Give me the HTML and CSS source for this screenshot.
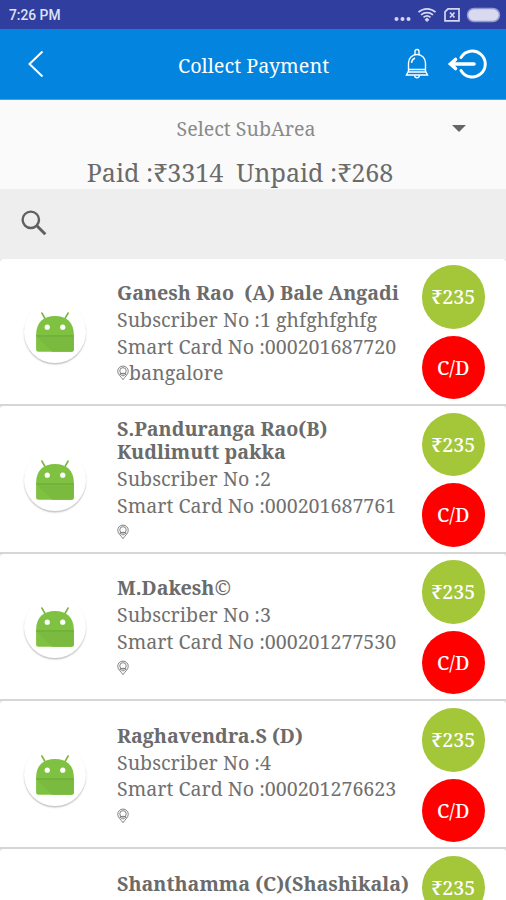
FILE: index.html
```html
<!DOCTYPE html>
<html lang="en">
<head>
    <meta charset="UTF-8">
    <meta name="viewport" content="width=device-width, initial-scale=1.0">
    <title>Collect Payment</title>
    <link rel="stylesheet" href="styles.css">
</head>
<body>
    <!-- Shared icons -->
    <svg class="sprite" width="0" height="0">
        <symbol id="droid" viewBox="0 0 64 64">
            <path d="M18.500 12.500l4 7M45.500 12.500l-4 7" stroke="#7cb342" stroke-width="1.8" stroke-linecap="round"/>
            <path d="M12.500 35C12.500 22 20 15.500 32 15.500s19.500 6.500 19.500 19.500v15a2.500 2.500 0 0 1-2.500 2.500H15a2.500 2.500 0 0 1-2.500-2.500z" fill="#7fc241"/>
            <path d="M12.500 36h39v14a2.500 2.500 0 0 1-2.500 2.500H29z" fill="#7aba3f"/>
            <path d="M12.500 36h39" stroke="#6aa53a" stroke-width="1"/>
            <circle cx="24" cy="27" r="2.700" fill="#fff"/>
            <circle cx="40" cy="27" r="2.700" fill="#fff"/>
        </symbol>
        <symbol id="pin" viewBox="0 0 13 16">
            <path d="M6.500 15.200C4.500 12 .8 9.800.8 6.200a5.700 5.700 0 0 1 11.400 0c0 3.600-3.700 5.800-5.700 9z"/>
            <circle cx="6.500" cy="5.700" r="3.500"/>
            <path d="M3 9.300c1-1.300 6-1.300 7 0l-3.500 2z"/>
        </symbol>
    </svg>

    <div class="status-bar">
        <span>7:26 PM</span>
        <svg class="status-icons" width="114" height="20" viewBox="0 0 114 20">
            <g fill="#d5d7f0">
                <circle cx="9.500" cy="14" r="2"/>
                <circle cx="15.500" cy="14" r="2"/>
                <circle cx="21.500" cy="14" r="2"/>
                <path d="M40 12.500l2.400 2.300L40 17l-2.400-2.200z"/>
            </g>
            <g fill="none" stroke="#d5d7f0" stroke-width="1.700">
                <path d="M31.500 7.200c5-4.400 12-4.400 17 0M34 9.800c3.500-3 8.500-3 12 0M36.500 12.300c2.200-1.800 4.800-1.800 7 0"/>
                <path d="M61 3.800h11v12H58V6.800z"/>
                <path d="M63 7.500l4.500 5M67.500 7.500l-4.500 5"/>
            </g>
            <rect x="80.500" y="3.500" width="32" height="13" rx="6.500" fill="#d9daf0" stroke="#9297cf" stroke-width="1.500"/>
        </svg>
    </div>

    <header class="toolbar">
        <svg class="back" width="16" height="28" viewBox="0 0 16 28">
            <path d="M14.500 1.500L1.500 14l13 12.500"/>
        </svg>
        <h1>Collect Payment</h1>
        <svg class="bell" width="24" height="32" viewBox="0 0 24 32">
            <path d="M10 7V3.500a2 2 0 0 1 4 0V7M3.500 24v-9c0-4.500 3.500-8.500 8.500-8.500s8.500 4 8.500 8.500v9M3.500 21.500h17M3 24h18l1.500 3h-21zM9.500 27.500c.5 3 4.500 3 5 0M6.500 15c.2-2.300 1.500-4.200 3.500-5"/>
        </svg>
        <svg class="logout" width="40" height="32" viewBox="0 0 40 32">
            <path d="M14 9.500a13 13 0 1 1 0 13" stroke-width="3"/>
            <path d="M27 16H4M8.500 11.500L3.500 16l5 4.500" stroke-width="3.600"/>
        </svg>
    </header>

    <div class="summary">
        <div class="area-select">Select SubArea <i class="caret"></i></div>
        <div class="totals">Paid :₹3314&nbsp; Unpaid :₹268</div>
    </div>

    <div class="search">
        <svg width="26" height="26" viewBox="0 0 26 26">
            <circle cx="9.800" cy="9.800" r="8.200" stroke-width="2.400"/>
            <path d="M15.800 15.800l8.500 8.500" stroke-width="3"/>
        </svg>
    </div>

    <!-- Subscribers -->
    <div class="list">
        <div class="card">
            <div class="avatar"><svg><use href="#droid"/></svg></div>
            <div class="info">
                <h2>Ganesh Rao&nbsp; (A) Bale Angadi</h2>
                <p>Subscriber No :1 ghfghfghfg</p>
                <p>Smart Card No :000201687720</p>
                <p class="place"><svg class="pin"><use href="#pin"/></svg>bangalore</p>
            </div>
            <div class="actions">
                <div class="amount">₹235</div>
                <div class="cd">C/D</div>
            </div>
        </div>
        <div class="card">
            <div class="avatar"><svg><use href="#droid"/></svg></div>
            <div class="info">
                <h2>S.Panduranga Rao(B)<br>Kudlimutt pakka</h2>
                <p>Subscriber No :2</p>
                <p>Smart Card No :000201687761</p>
                <p class="place"><svg class="pin"><use href="#pin"/></svg></p>
            </div>
            <div class="actions">
                <div class="amount">₹235</div>
                <div class="cd">C/D</div>
            </div>
        </div>
        <div class="card">
            <div class="avatar"><svg><use href="#droid"/></svg></div>
            <div class="info">
                <h2>M.Dakesh<span class="mark">©</span></h2>
                <p>Subscriber No :3</p>
                <p>Smart Card No :000201277530</p>
                <p class="place"><svg class="pin"><use href="#pin"/></svg></p>
            </div>
            <div class="actions">
                <div class="amount">₹235</div>
                <div class="cd">C/D</div>
            </div>
        </div>
        <div class="card">
            <div class="avatar"><svg><use href="#droid"/></svg></div>
            <div class="info">
                <h2>Raghavendra.S (D)</h2>
                <p>Subscriber No :4</p>
                <p>Smart Card No :000201276623</p>
                <p class="place"><svg class="pin"><use href="#pin"/></svg></p>
            </div>
            <div class="actions">
                <div class="amount">₹235</div>
                <div class="cd">C/D</div>
            </div>
        </div>
        <div class="card partial">
            <div class="avatar"></div>
            <div class="info">
                <h2>Shanthamma (C)(Shashikala)</h2>
            </div>
            <div class="actions">
                <div class="amount">₹235</div>
            </div>
        </div>
    </div>
</body>
</html>
```
FILE: styles.css
```css
* {
    box-sizing: border-box;
}

body {
    margin: 0;
    height: 900px;
    overflow: hidden;
    background-color: #fafafa;
    color: #6b6b6b;
    font-family: "Noto Serif", "DejaVu Serif Condensed", "DejaVu Serif", serif;
}

h1, h2, p {
    margin: 0;
}

svg {
    fill: none;
    flex: none;
}

.sprite {
    position: absolute;
}

.status-bar {
    display: flex;
    justify-content: space-between;
    align-items: center;
    height: 29px;
    padding: 0 5px 0 9px;
    background-color: #303f9f;
    color: #dfe1f5;
    font: 500 13.8px Roboto, sans-serif;
}

/* Blue toolbar */
.toolbar {
    display: flex;
    align-items: center;
    height: 71px;
    padding: 0 19px 0 28px;
    background-color: #0384de;
    border-bottom: 1px solid #4a9fdf;
}

.toolbar svg {
    stroke: #ffffff;
}

.toolbar h1 {
    flex: 1;
    padding: 2px 0 0 134px;
    color: #ffffff;
    font-size: 19.8px;
    font-weight: normal;
    white-space: nowrap;
}

.back {
    stroke-width: 2;
}

.bell {
    stroke-width: 1.4;
    margin-right: 18px;
}

.logout {
    stroke-linecap: round;
}

.summary {
    height: 88.5px;
    padding-top: 14px;
    text-align: center;
}

.area-select {
    position: relative;
    height: 29px;
    line-height: 29px;
    padding-right: 14px;
    color: #8a8a8a;
    font-size: 19.6px;
}

.caret {
    position: absolute;
    right: 40px;
    top: 11px;
    border: 7px solid transparent;
    border-top-color: #666666;
    border-bottom: 0;
}

.totals {
    height: 45px;
    line-height: 58px;
    padding-right: 26px;
    font-size: 25.1px;
    white-space: nowrap;
}

.search {
    display: flex;
    align-items: center;
    height: 70px;
    padding: 0 0 2px 21px;
    background-color: #eeeeee;
}

.search svg {
    stroke: #606060;
}

/* Subscriber cards */
.list {
    background-color: #e6e6e6;
}

.card {
    display: flex;
    align-items: center;
    height: 147.6px;
    padding: 2px 21px 0 24px;
    background-color: #ffffff;
    border-bottom: 2px solid #d6d6d6;
    border-radius: 4px 4px 0 0;
}

/* Row that runs off the bottom of the screen */
.partial {
    align-items: flex-start;
    height: 51px;
    padding-top: 7px;
    border-bottom: 0;
    overflow: hidden;
}

.partial .avatar {
    margin-top: 36px;
}

.partial .info {
    padding-top: 16px;
}

.avatar {
    width: 62px;
    height: 62px;
    border-radius: 50%;
    box-shadow: 0 1.5px 1.5px #c4c4c4;
}

.avatar svg {
    display: block;
    width: 62px;
    height: 62px;
}

.info {
    flex: 1;
    margin-left: 31px;
    padding-top: 3px;
    white-space: nowrap;
}

.info h2 {
    margin-bottom: 3px;
    font-size: 19.7px;
    line-height: 23px;
}

.mark {
    font-weight: normal;
}

.info p {
    font-size: 19.6px;
    line-height: 26.4px;
    height: 26.4px;
    color: #707070;
}

.place {
    display: flex;
    align-items: center;
}

.pin {
    width: 12px;
    height: 16px;
    stroke: #777777;
    stroke-width: 1;
}

.actions {
    display: grid;
    gap: 7px;
}

.amount, .cd {
    width: 63.5px;
    height: 63.5px;
    border-radius: 50%;
    background-color: #a4c639;
    color: #ffffff;
    font-size: 19.6px;
    font-weight: 500;
    line-height: 64px;
    text-align: center;
}

.cd {
    background-color: #ff0000;
}
```
